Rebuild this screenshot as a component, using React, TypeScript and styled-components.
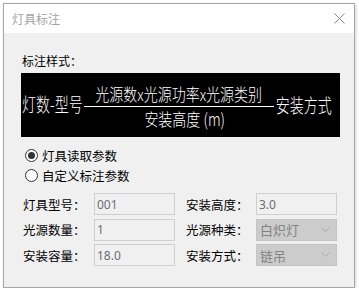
import React from 'react'
import styled, { createGlobalStyle } from 'styled-components'

const UI_FONT = `"Microsoft YaHei", "Noto Sans CJK SC", "Noto Sans", sans-serif`

const GlobalStyle = createGlobalStyle`
  html, body {
    margin: 0;
    padding: 0;
    background: #ffffff;
  }
  body {
    font-family: ${UI_FONT};
    font-size: 12px;
    color: #000;
  }
`

const Window = styled.div`
  margin: 3px 0 0 3px;
  width: 352px;
  height: 285px;
  box-sizing: border-box;
  border: 1px solid #a6a6a6;
  background: #f0f0f0;
  box-shadow: 1px 1px 3px rgba(0, 0, 0, 0.18);
  display: flex;
  flex-direction: column;
`

const TitleBar = styled.div`
  height: 29px;
  background: #ffffff;
  display: flex;
  align-items: center;
  justify-content: space-between;
  padding: 0 9px 0 8px;
`

const Title = styled.span`
  font-size: 12px;
  color: #a3a3a3;
  line-height: 16px;
  margin-top: 1px;
`

const CloseButton = styled.button`
  border: 0;
  background: transparent;
  padding: 0;
  width: 12px;
  height: 12px;
  display: flex;
  align-items: center;
  justify-content: center;
`

const Content = styled.div`
  padding: 19px 14px 0 17px;
  display: flex;
  flex-direction: column;
`

const SectionLabel = styled.div`
  height: 18px;
  line-height: 18px;
  margin-bottom: 3px;
  padding-left: 1px;
`

const Preview = styled.div`
  height: 64px;
  background: #000;
  color: #fff;
  display: flex;
  align-items: center;
  padding-left: 1px;
  font-family: "Noto Sans CJK SC", sans-serif;
  font-weight: 300;
  white-space: nowrap;
  overflow: hidden;
`

const CadText = styled.span<{ $size: number; $stretch: number; $shift?: number }>`
  display: inline-block;
  font-size: ${p => p.$size}px;
  line-height: ${p => p.$size + 4}px;
  transform: scaleY(${p => p.$stretch}) translateY(${p => p.$shift ?? 0}px);
`

const Fraction = styled.div`
  width: 190px;
  display: flex;
  flex-direction: column;
  align-items: center;
  margin-left: 1px;
  margin-right: 2px;
`

const Numerator = styled.div`
  height: 24px;
  display: flex;
  align-items: center;
  justify-content: center;
  width: 100%;
  border-bottom: 1px solid #fff;
`

const Denominator = styled.div`
  height: 22px;
  display: flex;
  align-items: center;
  padding-left: 12px;
`

const RadioGroup = styled.div`
  margin-top: 9px;
  display: flex;
  flex-direction: column;
  gap: 2px;
  padding-left: 4px;
`

const RadioRow = styled.label`
  height: 18px;
  display: flex;
  align-items: center;
  gap: 4px;
  font-size: 12.5px;
`

const RadioCircle = styled.span<{ $checked?: boolean }>`
  width: 13px;
  height: 13px;
  box-sizing: border-box;
  border: 1px solid #333;
  border-radius: 50%;
  background: #fff;
  display: flex;
  align-items: center;
  justify-content: center;

  &::after {
    content: '';
    width: 7px;
    height: 7px;
    border-radius: 50%;
    background: ${p => (p.$checked ? '#333' : 'transparent')};
  }
`

const FieldGrid = styled.div`
  margin-top: 9px;
  padding-left: 2px;
  display: grid;
  grid-template-columns: 71px 81px 81px 81px;
  row-gap: 3.5px;
  grid-auto-rows: 22px;
`

const FieldLabel = styled.span<{ $indent?: boolean }>`
  display: flex;
  align-items: center;
  font-size: 12.5px;
  white-space: nowrap;
  padding-left: ${p => (p.$indent ? '11px' : '0')};
`

const TextBox = styled.div`
  box-sizing: border-box;
  border: 1px solid #cfcfcf;
  background: #f0f0f0;
  color: #6d6d73;
  font-family: "Segoe UI", "Noto Sans", "Noto Sans CJK SC", sans-serif;
  font-size: 12px;
  display: flex;
  align-items: center;
  padding-left: 2px;
`

const Combo = styled.div`
  box-sizing: border-box;
  border: 1px solid #c4c4c4;
  background: #cccccc;
  color: #838383;
  font-size: 13px;
  display: flex;
  align-items: center;
  justify-content: space-between;
  padding: 0 6px 0 3px;
`

const Chevron = () => (
  <svg width="9" height="6" viewBox="0 0 9 6">
    <polyline points="0.5,0.5 4.5,4.5 8.5,0.5" fill="none" stroke="#a8a8a8" strokeWidth="1" />
  </svg>
)

const fields: [string, string, string, string, boolean][] = [
  ['灯具型号：', '001', '安装高度：', '3.0', false],
  ['光源数量：', '1', '光源种类：', '白炽灯', true],
  ['安装容量：', '18.0', '安装方式：', '链吊', true]
]

export default function App() {
  return (
    <>
      <GlobalStyle />
      <Window>
        <TitleBar>
          <Title>灯具标注</Title>
          <CloseButton>
            <svg width="11" height="11" viewBox="0 0 11 11">
              <path d="M0.5 0.5 L10.5 10.5 M10.5 0.5 L0.5 10.5" stroke="#8a8a8a" strokeWidth="1" />
            </svg>
          </CloseButton>
        </TitleBar>
        <Content>
          <SectionLabel>标注样式：</SectionLabel>
          <Preview>
            <CadText $size={14} $stretch={1.35} $shift={-1}>灯数-型号</CadText>
            <Fraction>
              <Numerator>
                <CadText $size={14} $stretch={1.2}>光源数x光源功率x光源类别</CadText>
              </Numerator>
              <Denominator>
                <CadText $size={14} $stretch={1.25}>安装高度 (m)</CadText>
              </Denominator>
            </Fraction>
            <CadText $size={14} $stretch={1.4}>安装方式</CadText>
          </Preview>
          <RadioGroup>
            <RadioRow>
              <RadioCircle $checked />
              灯具读取参数
            </RadioRow>
            <RadioRow>
              <RadioCircle />
              自定义标注参数
            </RadioRow>
          </RadioGroup>
          <FieldGrid>
            {fields.map(([l1, v1, l2, v2, combo]) => (
              <React.Fragment key={l1}>
                <FieldLabel>{l1}</FieldLabel>
                <TextBox>{v1}</TextBox>
                <FieldLabel $indent>{l2}</FieldLabel>
                {combo ? (
                  <Combo>
                    {v2}
                    <Chevron />
                  </Combo>
                ) : (
                  <TextBox>{v2}</TextBox>
                )}
              </React.Fragment>
            ))}
          </FieldGrid>
        </Content>
      </Window>
    </>
  )
}
